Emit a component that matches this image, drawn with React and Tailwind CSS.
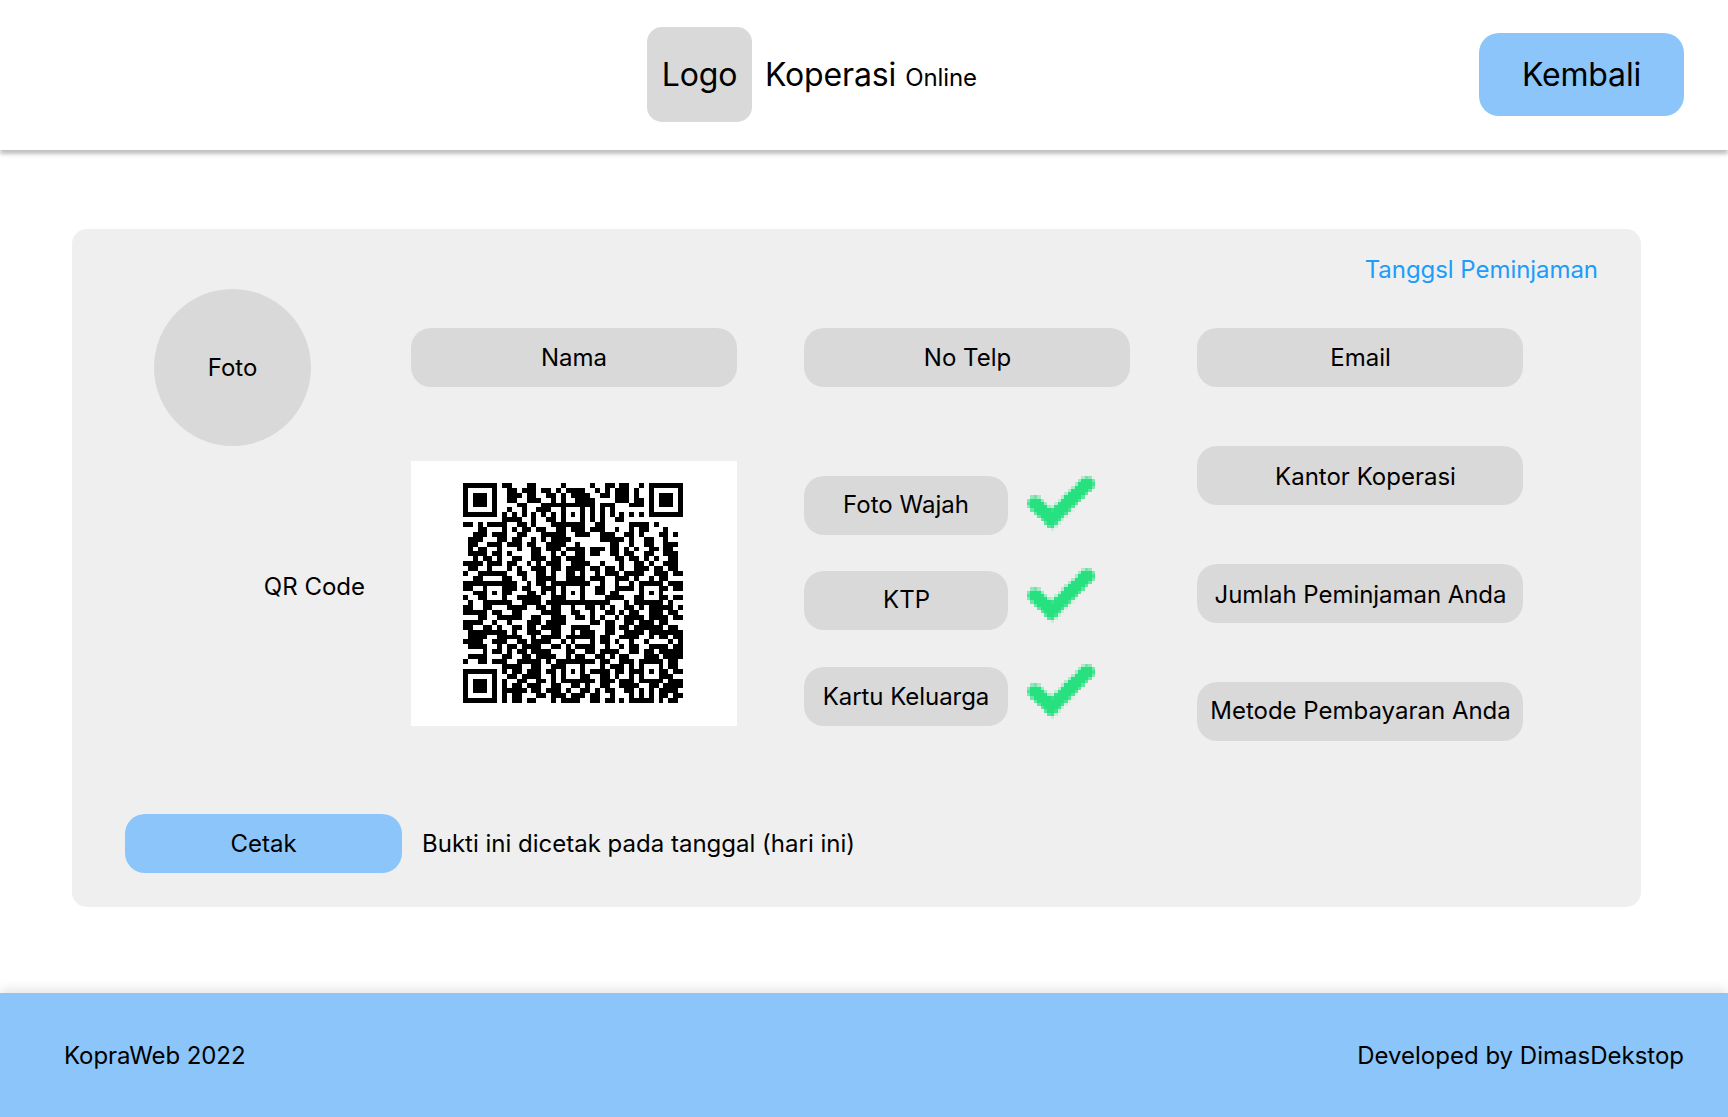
import React from "react";

const SIZE = 45;

// Data modules of the version 7 code; fixed patterns are laid over them below.
const QR_ROWS = [
  "........##...##.....#.....#..##.##..#........",
  ".........##.###.##.#.####..#.#.###.#.........",
  ".........###.##..##.#.####..##.###.#.........",
  ".........##..###..#.#..####....####..........",
  "...........##...########.##.###...###........",
  ".........#..#..###..#..##.#.#.#..............",
  "........#.#.#.#.#.#.#.#.#.#.#.#.#.#.#........",
  "........####..#..##.#..##.#.#..##............",
  "##.#.####..##.#...###..##..##.....####.#.....",
  "...##...#.#.##.##..##.###.###..#..#.##...#...",
  "..###..##..##...#####..###..###..##.#...##.#.",
  ".###...##.##..#.#.####......#####.#..##..#...",
  ".##..###.###.##..####..#......##..#..##..###.",
  ".#.##..#...#..##.###.####.###.##.#.#..##.##..",
  ".####.##.#....##..#.#..##.##..##.##..##..###.",
  "..#.##.#..##..###.##.####......##.##.#.#..##.",
  "####.###.##..#.#.###..####..#...#..##.#..###.",
  ".##..##..#.#..###.##.####.##.##.#..###.##.##.",
  "#..###.##..##..##.#..##.#..#.###.####..###.##",
  "..##..#.##..#..####..####.###..###.#..#.##...",
  "####.######..#.##.########..#..#..#.#####.###",
  "##..##...##.##..###.#...#..##..####.#...##.##",
  "..###.#.##...##.#.#.#.#.#..##.##....#.#.#....",
  "#..##...#..#####..###...#....####..##...##.##",
  ".#..######..####.#############...#.######.#..",
  "##..##...####..##.##..#..##.#.#..##.#.#####.#",
  "#####.##..##....####..##..#..##.#.##..###.##.",
  "...##.######..##..###..##.#.#..#.####.####.##",
  "####..#..#...###.####.....##.##..##.###.##...",
  "##..####..##.##.####..####...##.##.######.##.",
  ".#####.##.#..###..##..#.###..##..####.#######",
  ".####..#####..#.####.######.##..####..#.##.##",
  "####..###..##.####..#.#...#.##.#..#..#....#.#",
  ".####.##.##.####..##.#.####..#..#.##..####.##",
  ".##.##.#.#.##.####...##..##.####..##.##.#####",
  "##..##..##..##.####..#.##..##.#.##...###.####",
  "######.##..#####.#.########.##..###.#####.##.",
  "........####..##..###...#...#.###.#.#...#.##.",
  "........#.##.###.##.#.#.#.####.##.###.#.##.##",
  ".........##.####..#.#...##..##.#..#.#...###..",
  "........#..##..##.#.####.##.###.###.####..###",
  "........#.##.###..##..##.#..##..####..##.####",
  "........#####.##.###.#..##.#.##..##.#.#.####.",
  "........#.##...##.###.###.##..#...#.#.#.##.##",
  "........#.##.##...#.####..##.##.#.#####.#.##.",
];

const VERSION_BITS = "001010010011111000";

function isDark(r, c) {
  const finders = [
    [0, 0],
    [0, SIZE - 7],
    [SIZE - 7, 0],
  ];
  for (const [fr, fc] of finders) {
    const dr = r - fr;
    const dc = c - fc;
    if (dr >= -1 && dr <= 7 && dc >= -1 && dc <= 7) {
      const ring = Math.max(Math.abs(dr - 3), Math.abs(dc - 3));
      return ring === 3 || ring <= 1;
    }
  }
  const centres = [
    [6, 22],
    [22, 6],
    [22, 22],
    [22, 38],
    [38, 22],
    [38, 38],
  ];
  for (const [ar, ac] of centres) {
    const ring = Math.max(Math.abs(r - ar), Math.abs(c - ac));
    if (ring <= 2) return ring !== 1;
  }
  if (r === 6 || c === 6) return (r + c) % 2 === 0;
  if (r < 6 && c >= 34 && c <= 36) return VERSION_BITS[r * 3 + c - 34] === "1";
  if (c < 6 && r >= 34 && r <= 36) return VERSION_BITS[c * 3 + r - 34] === "1";
  return QR_ROWS[r][c] === "#";
}

function qrPath() {
  let d = "";
  for (let r = 0; r < SIZE; r++) {
    for (let c = 0; c < SIZE; c++) {
      if (!isDark(r, c)) continue;
      let end = c;
      while (end + 1 < SIZE && isDark(r, end + 1)) end++;
      d += `M${c} ${r}h${end - c + 1}v1h-${end - c + 1}z`;
      c = end;
    }
  }
  return d;
}

function QrCode() {
  return (
    <svg viewBox="0 0 45 45" className="size-[220px]" shapeRendering="crispEdges">
      <path d={qrPath()} fill="#000" />
    </svg>
  );
}

function distanceTo(px, py, ax, ay, bx, by) {
  const t = Math.max(
    0,
    Math.min(1, ((px - ax) * (bx - ax) + (py - ay) * (by - ay)) / ((bx - ax) ** 2 + (by - ay) ** 2))
  );
  return Math.hypot(px - ax - t * (bx - ax), py - ay - t * (by - ay));
}

// Low-resolution tick: each cell is as opaque as the stroke covers it.
function Check() {
  const cells = [];
  for (let y = 0; y < 17; y++) {
    for (let x = 0; x < 20; x++) {
      const px = x + 0.5;
      const py = y + 0.5;
      let dist = Math.min(
        distanceTo(px, py, 2.35, 8.5, 7.1, 13.4),
        distanceTo(px, py, 7.1, 13.4, 17.7, 2.5)
      );
      if (py > 13.4) dist = Math.min(dist, (Math.abs(px - 7.1) + py - 13.4) / Math.SQRT2);
      const alpha = Math.max(0, Math.min(1, 2.65 - dist));
      if (alpha > 0.05) cells.push([x, y, alpha]);
    }
  }
  return (
    <svg
      viewBox="0 0 20 17"
      preserveAspectRatio="none"
      className="h-[55px] w-[68px]"
      shapeRendering="crispEdges"
    >
      {cells.map(([x, y, alpha]) => (
        <rect key={`${x}-${y}`} x={x} y={y} width="1" height="1" fill="#27E07F" fillOpacity={alpha} />
      ))}
    </svg>
  );
}

function Pill({ children, className = "" }) {
  return (
    <div
      className={`flex h-[59px] items-center justify-center rounded-[20px] bg-[#d9d9d9] whitespace-nowrap ${className}`}
    >
      {children}
    </div>
  );
}

export default function App() {
  return (
    <div className="flex h-[1117px] w-[1728px] flex-col overflow-hidden bg-white font-['Inter',sans-serif] text-[24px] leading-[29px] text-black">
      <header className="flex h-[150px] shrink-0 items-start bg-white pr-11 pl-[647px] shadow-[0_4px_4px_rgba(0,0,0,0.25)]">
        <div className="mt-[27px] flex h-[95px] w-[105px] items-center justify-center rounded-[15px] bg-[#d9d9d9] text-[32px] leading-[39px] tracking-[-0.2px]">
          Logo
        </div>
        <div className="mt-[55px] ml-[13px] flex items-baseline whitespace-nowrap">
          <span className="text-[32px] leading-[39px] tracking-[-0.15px]">Koperasi</span>
          <span className="ml-[9px] tracking-[-0.1px]">Online</span>
        </div>
        <button className="mt-[33px] ml-auto h-[83px] w-[205px] rounded-[20px] bg-[#8cc5fa] text-[32px] leading-[39px] tracking-[-0.15px]">
          Kembali
        </button>
      </header>

      <main className="mt-[79px] ml-[72px] flex h-[678px] w-[1569px] shrink-0 flex-col rounded-[15px] bg-[#efefef]">
        <div className="mt-[26px] mr-[43px] text-right tracking-[-0.05px] text-[#209cfa]">Tanggsl Peminjaman</div>

        <div className="flex h-[530px] items-start">
          <div className="mt-[5px] ml-[82px] flex w-[211px] flex-col">
            <div className="flex size-[157px] items-center justify-center rounded-full bg-[#d9d9d9]">Foto</div>
            <div className="mt-[126px] text-right whitespace-nowrap">QR Code</div>
          </div>

          <div className="mt-[44px] ml-[46px] flex w-[326px] flex-col gap-[74px]">
            <Pill>Nama</Pill>
            <div className="flex h-[265px] justify-center bg-white pt-[22px] pr-[2px]">
              <QrCode />
            </div>
          </div>

          <div className="mt-[44px] ml-[67px] flex w-[326px] flex-col">
            <Pill className="pl-[1px]">No Telp</Pill>
            <div className="mt-[89px] flex">
              <div className="flex w-[204px] flex-col">
                <Pill className="pb-[3px]">Foto Wajah</Pill>
                <Pill className="mt-9 pb-[2px] pl-[1px]">KTP</Pill>
                <Pill className="mt-[37px] tracking-[-0.05px]">Kartu Keluarga</Pill>
              </div>
              <div className="ml-[19px] flex flex-col">
                <Check />
                <div className="mt-[37px] flex">
                  <Check />
                </div>
                <div className="mt-[41px] flex">
                  <Check />
                </div>
              </div>
            </div>
          </div>

          <div className="mt-[44px] ml-[67px] flex w-[326px] flex-col gap-[59px]">
            <Pill className="pl-[1px]">Email</Pill>
            <Pill className="pt-[2px] pl-[11px]">Kantor Koperasi</Pill>
            <Pill className="pt-[2px] pl-[1px] tracking-[-0.05px]">Jumlah Peminjaman Anda</Pill>
            <Pill className="pb-[2px] pl-[1px]">Metode Pembayaran Anda</Pill>
          </div>
        </div>

        <div className="ml-[53px] flex items-center">
          <button className="h-[59px] w-[277px] rounded-[20px] bg-[#8cc5fa]">Cetak</button>
          <span className="ml-[20px] whitespace-nowrap">Bukti ini dicetak pada tanggal (hari ini)</span>
        </div>
      </main>

      <footer className="mt-[86px] flex h-[124px] shrink-0 items-center justify-between bg-[#8cc5fa] pr-11 pl-16 shadow-[0_-4px_10px_rgba(0,0,0,0.1)]">
        <span className="tracking-[-0.08px]">KopraWeb 2022</span>
        <span>Developed by DimasDekstop</span>
      </footer>
    </div>
  );
}
